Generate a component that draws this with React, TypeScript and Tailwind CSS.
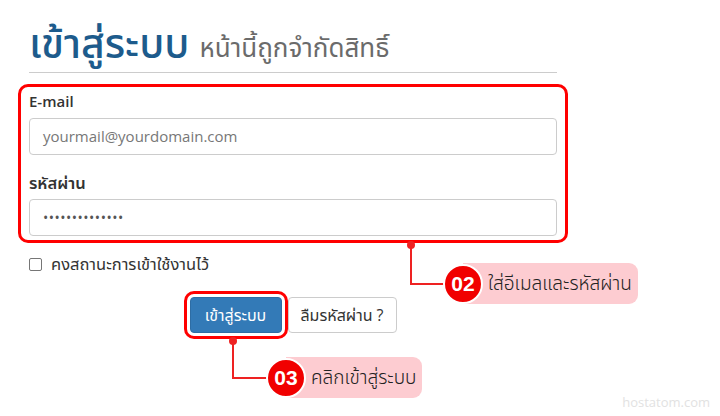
import React from "react";

const FONT = { fontFamily: '"Open Sans", "Noto Sans", "Noto Sans Thai", "Liberation Sans", sans-serif' };

function Callout({ num, text, x, y, w }: { num: string; text: string; x: number; y: number; w: number }) {
  return (
    <div className="absolute flex items-center" style={{ left: x, top: y - 21 }}>
      <div className="relative z-10 flex h-[40px] w-[40px] items-center justify-center rounded-full border-2 border-white bg-[#f10000] text-[21px] font-bold text-white" style={{ fontFamily: '"Liberation Sans", Arial, sans-serif' }}>
        {num}
      </div>
      <div className="-ml-[20px] flex h-[41px] items-center whitespace-nowrap rounded-r-[9px] bg-[#fdccd1] pl-[25px] text-[19px] font-light text-[#222]" style={{ width: w }}>
        {text}
      </div>
    </div>
  );
}

export default function App() {
  return (
    <div className="relative h-[416px] w-[720px] overflow-hidden bg-white" style={FONT}>
      <div className="ml-[29px] w-[528px]">
        <div className="flex h-[73px] items-end gap-[10px] border-b border-[#cccccc] pb-[5px]">
          <span className="whitespace-nowrap text-[41px] leading-[50px] font-medium text-[#1d5b8c]">เข้าสู่ระบบ</span>
          <span className="mb-[2px] whitespace-nowrap text-[26px] leading-[36px] text-[#6b6b6b]">หน้านี้ถูกจำกัดสิทธิ์</span>
        </div>
        <div className="-mx-[11px] mt-[11px] rounded-[10px] border-[3px] border-[#ff0000] px-[8px] pt-[4px] pb-[4px]">
          <div className="h-[20px] text-[15px] leading-[20px] font-semibold text-[#333]">E-mail</div>
          <div className="mt-[7px] flex h-[37px] items-center rounded-[4px] border border-[#cccccc] px-[13px] text-[15px] text-[#777]">
            yourmail@yourdomain.com
          </div>
          <div className="mt-[18px] h-[20px] whitespace-nowrap text-[16.5px] leading-[20px] font-semibold text-[#333]">รหัสผ่าน</div>
          <div className="mt-[6px] flex h-[37px] items-center rounded-[4px] border border-[#cccccc] px-[13px] text-[14px] tracking-[0.5px] text-[#555]">
            ••••••••••••••
          </div>
        </div>
        <div className="mt-[11px] flex h-[20px] items-center gap-[9px]">
          <div className="h-[13px] w-[13px] rounded-[2px] border border-[#767676] bg-white" />
          <span className="whitespace-nowrap text-[16.5px] text-[#333]">คงสถานะการเข้าใช้งานไว้</span>
        </div>
        <div className="mt-[23px] flex justify-center gap-[6px]">
          <button className="h-[36px] w-[92px] whitespace-nowrap rounded-[4px] border border-[#2e6da4] bg-[#337ab7] text-[16px] text-white outline-[3px] outline-offset-[3px] outline-[#ff0000] outline-solid">
            เข้าสู่ระบบ
          </button>
          <button className="h-[36px] w-[109px] whitespace-nowrap rounded-[4px] border border-[#cccccc] bg-white text-[16px] text-[#333]">
            ลืมรหัสผ่าน ?
          </button>
        </div>
      </div>

      <svg className="absolute left-0 top-0" width="720" height="416">
        <circle cx="411" cy="245" r="4" fill="#ee2222" />
        <polyline points="411,245 411,284 450,284" fill="none" stroke="#ee2222" strokeWidth="2" />
        <circle cx="233" cy="341" r="4" fill="#ee2222" />
        <polyline points="233,341 233,378 272,378" fill="none" stroke="#ee2222" strokeWidth="2" />
      </svg>

      <Callout num="02" text="ใส่อีเมลและรหัสผ่าน" x={443} y={284} w={175} />
      <Callout num="03" text="คลิกเข้าสู่ระบบ" x={266} y={378} w={136} />

      <div className="absolute right-[10px] bottom-[4px] text-[13px] text-[#e2e2e2]">hostatom.com</div>
    </div>
  );
}
